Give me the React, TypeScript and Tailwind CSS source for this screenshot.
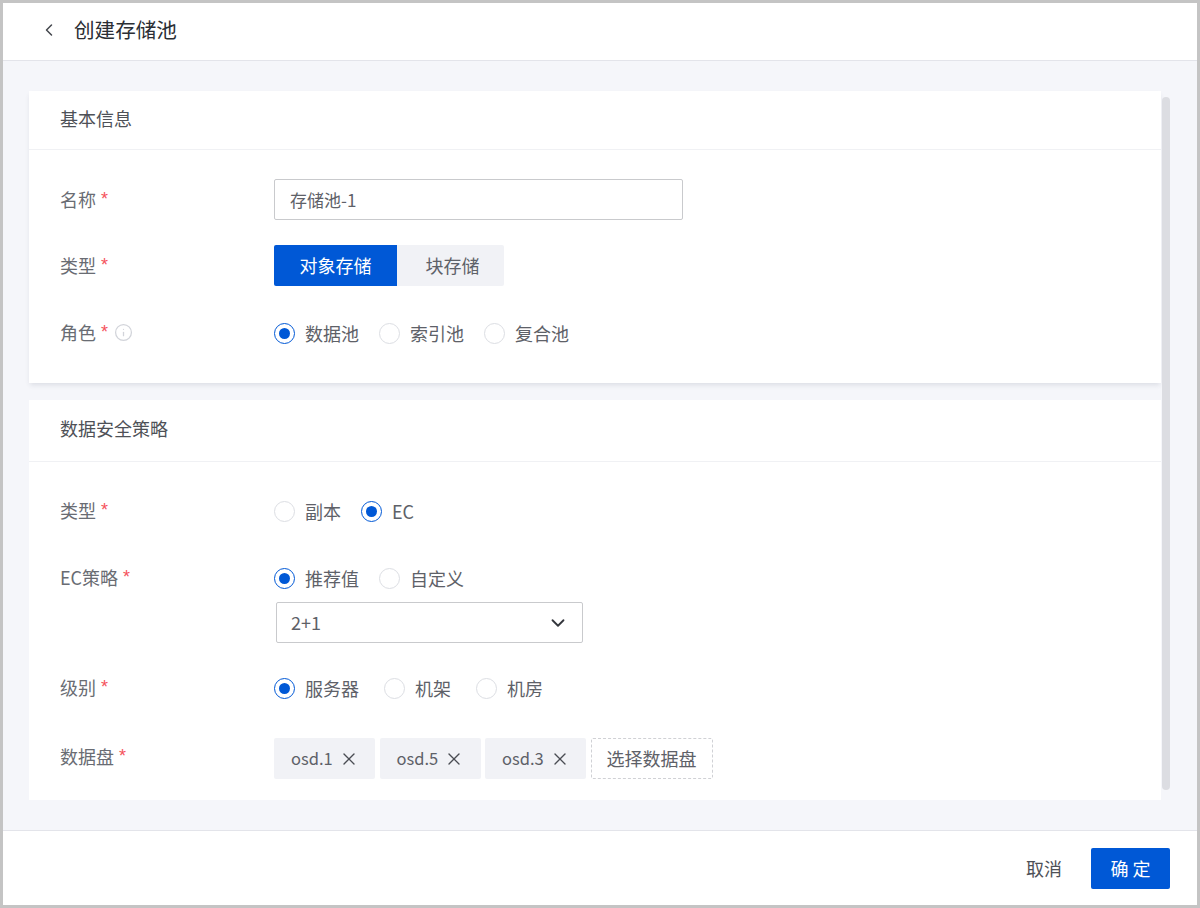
import { ChevronDown, ChevronLeft, Info, X } from 'lucide-react'
import type { ReactNode } from 'react'

const font = { fontFamily: '"Noto Sans CJK SC", "Liberation Sans", sans-serif' }

function Label({ text, info, lift = 'pb-[2px]' }: { text: string; info?: boolean; lift?: string }) {
  return (
    <div className={`flex w-[214px] shrink-0 items-center text-[18px] leading-[24px] text-[#696c73] ${lift}`}>
      <span>{text}</span>
      <span className="ml-[5px] font-['Liberation_Sans'] text-[18px] text-[#f5525c]">*</span>
      {info && <Info size={19} strokeWidth={1.6} className="ml-[6px] text-[#d2d4da]" />}
    </div>
  )
}

function Radio({ label, checked, gap }: { label: string; checked?: boolean; gap: string }) {
  return (
    <div className={`flex items-center ${gap}`}>
      {checked ? (
        <span className="flex h-[21px] w-[21px] items-center justify-center rounded-full border border-[#0058d6] bg-white">
          <span className="h-[11px] w-[11px] rounded-full bg-[#0058d6]" />
        </span>
      ) : (
        <span className="h-[21px] w-[21px] rounded-full border border-[#dcdee3] bg-white" />
      )}
      <span className="ml-[10px] text-[18px] leading-[24px] text-[#5e6168]">{label}</span>
    </div>
  )
}

function Row({ className, children }: { className: string; children: ReactNode }) {
  return <div className={`flex items-center pl-[31px] ${className}`}>{children}</div>
}

function Tag({ name }: { name: string }) {
  return (
    <div className="flex h-[41px] w-[101px] items-center gap-[6px] rounded-[2px] bg-[#f1f2f6] pl-[17px] text-[16.5px] text-[#5e6168]">
      <span>{name}</span>
      <X size={20} strokeWidth={1.6} className="text-[#4a4d53]" />
    </div>
  )
}

export default function App() {
  return (
    <div style={font} className="flex h-[908px] w-[1200px] flex-col border-[3px] border-[#c4c4c4] bg-white">
      <header className="flex h-[58px] shrink-0 items-center border-b border-[#e3e4ea] pb-[4px] pl-[36px]">
        <ChevronLeft size={20} strokeWidth={1.8} className="text-[#44474d]" />
        <h1 className="ml-[15px] text-[20.6px] font-normal text-[#2b2e34]">创建存储池</h1>
      </header>

      <main className="relative flex-1 overflow-hidden bg-[#f5f6fa] pl-[26px] pr-[36px] pt-[30px]">
        <section className="h-[292px] bg-white shadow-[0_3px_5px_-1px_rgba(40,50,70,0.12)]">
          <div className="flex h-[59px] items-center border-b border-[#f0f1f4] pb-[4px] pl-[31px] text-[18px] text-[#4e5157]">基本信息</div>
          <Row className="mt-[29px]">
            <Label text="名称" />
            <div className="flex h-[41px] w-[409px] items-center rounded-[2px] border border-[#c9cacd] pl-[15px] text-[17px] text-[#5e6168]">存储池-1</div>
          </Row>
          <Row className="mt-[25px]">
            <Label text="类型" />
            <div className="flex h-[41px] w-[123px] items-center justify-center rounded-l-[2px] bg-[#0058d6] text-[18px] text-white">对象存储</div>
            <div className="flex h-[41px] w-[107px] items-center justify-center rounded-r-[2px] bg-[#f1f2f6] pl-[4px] text-[18px] text-[#5e6168]">块存储</div>
          </Row>
          <Row className="mt-[34px]">
            <Label text="角色" info />
            <Radio label="数据池" checked gap="mr-[20px]" />
            <Radio label="索引池" gap="mr-[20px]" />
            <Radio label="复合池" gap="" />
          </Row>
        </section>

        <section className="mt-[17px] h-[400px] bg-white">
          <div className="flex h-[62px] items-center border-b border-[#f0f1f4] pb-[4px] pl-[31px] text-[18px] text-[#4e5157]">数据安全策略</div>
          <Row className="mt-[36px]">
            <Label text="类型" />
            <Radio label="副本" gap="mr-[20px]" />
            <Radio label="EC" checked gap="" />
          </Row>
          <Row className="mt-[41px]">
            <Label text="EC策略" />
            <Radio label="推荐值" checked gap="mr-[20px]" />
            <Radio label="自定义" gap="" />
          </Row>
          <div className="mt-[11px] pl-[247px]">
            <div className="flex h-[41px] w-[307px] items-center justify-between rounded-[2px] border border-[#c9cacd] pl-[14px] pr-[13px] text-[18px] text-[#5e6168]">
              <span>2+1</span>
              <ChevronDown size={22} strokeWidth={2} className="text-[#33363c]" />
            </div>
          </div>
          <Row className="mt-[32px]">
            <Label text="级别" />
            <Radio label="服务器" checked gap="mr-[25px]" />
            <Radio label="机架" gap="mr-[25px]" />
            <Radio label="机房" gap="" />
          </Row>
          <Row className="mt-[37px]">
            <Label text="数据盘" lift="pb-[6px]" />
            <div className="flex gap-[4.5px]">
              <Tag name="osd.1" />
              <Tag name="osd.5" />
              <Tag name="osd.3" />
              <div className="flex h-[41px] w-[122px] items-center justify-center rounded-[2px] border border-dashed border-[#d0d1d5] text-[18px] text-[#5e6168]">选择数据盘</div>
            </div>
          </Row>
        </section>

        <div className="absolute left-[1159px] top-[36px] h-[693px] w-[8px] rounded-full bg-[#dcdde2]" />
      </main>

      <footer className="flex h-[75px] shrink-0 items-center justify-end border-t border-[#e3e4ea] pr-[27px]">
        <button className="mr-[29px] text-[18px] text-[#4e5157]">取消</button>
        <button className="flex h-[41px] w-[79px] items-center justify-center rounded-[2px] bg-[#0058d6] text-[18px] text-white">确 定</button>
      </footer>
    </div>
  )
}
